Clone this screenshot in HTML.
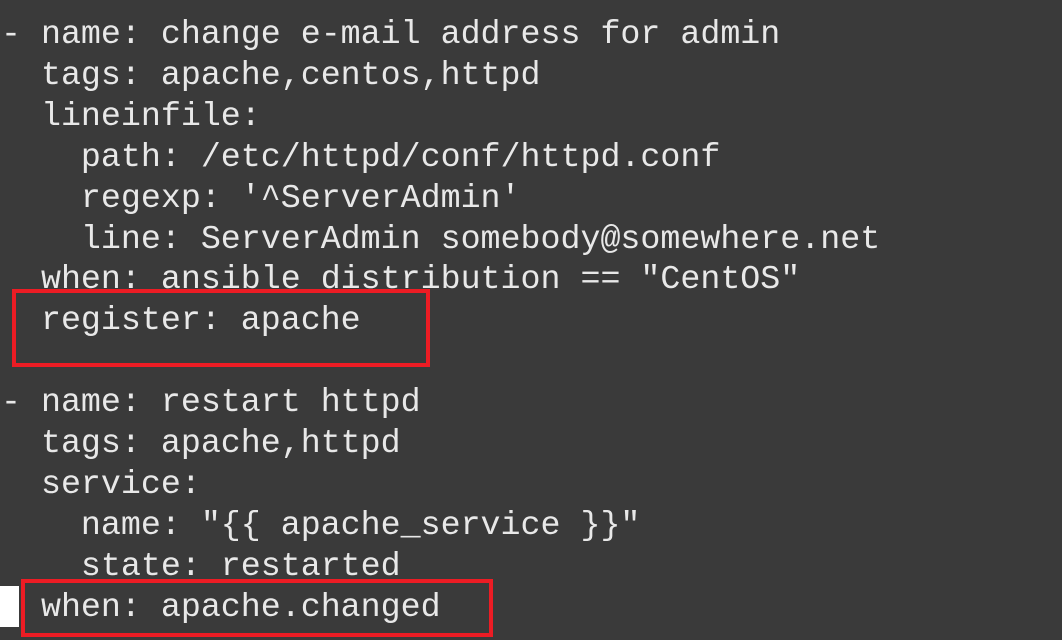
<!DOCTYPE html>
<html><head><style>
html,body{margin:0;padding:0;}
body{width:1062px;height:640px;background:#3a3a3a;overflow:hidden;position:relative;}
pre{position:absolute;left:1px;top:14px;margin:0;font-family:"Liberation Mono",monospace;font-size:33.3px;line-height:40.9px;color:#e8e8e8;}
.box{position:absolute;border:4px solid #ec1c24;box-sizing:border-box;}
.cur{position:absolute;left:0;top:586px;width:19px;height:41px;background:#fff;}
</style></head><body>
<pre>- name: change e-mail address for admin
  tags: apache,centos,httpd
  lineinfile:
    path: /etc/httpd/conf/httpd.conf
    regexp: '^ServerAdmin'
    line: ServerAdmin somebody@somewhere.net
  when: ansible_distribution == "CentOS"
  register: apache

- name: restart httpd
  tags: apache,httpd
  service:
    name: "{{ apache_service }}"
    state: restarted
  when: apache.changed</pre>
<div class="box" style="left:12px;top:289px;width:418px;height:78px"></div>
<div class="box" style="left:21px;top:579px;width:472px;height:58px"></div>
<div class="cur"></div>
</body></html>
